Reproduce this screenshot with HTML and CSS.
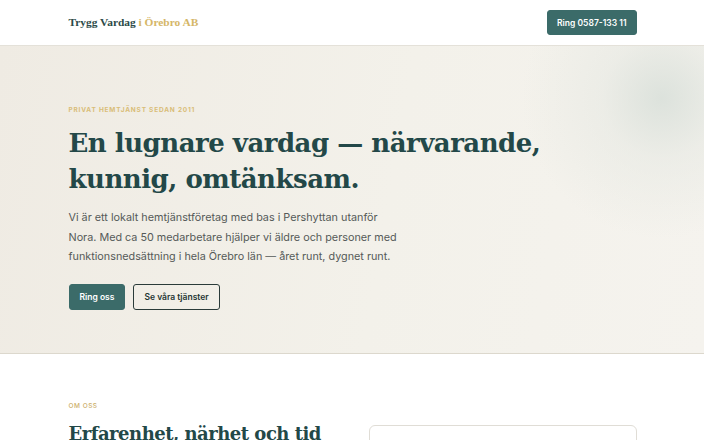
FILE: index.html
```html
<!DOCTYPE html>
<html lang="sv">
<head>
    <meta charset="UTF-8">
    <meta name="viewport" content="width=device-width, initial-scale=1.0">
    <link rel="stylesheet" href="styles.css">
    <title>Trygg Vardag i Örebro AB</title>
</head>
<body>
    <header class="site-header">
        <div class="container header-row">
            <a href="#" class="brand">Trygg Vardag <span>i Örebro AB</span></a>
            <a href="#" class="btn btn-primary btn-small">Ring 0587-133 11</a>
        </div>
    </header>

    <section class="hero">
        <div class="container">
            <p class="eyebrow">Privat hemtjänst sedan 2011</p>
            <h1>En lugnare vardag — närvarande, kunnig, omtänksam.</h1>
            <p class="lead">Vi är ett lokalt hemtjänstföretag med bas i Pershyttan utanför Nora. Med ca 50 medarbetare hjälper vi äldre och personer med funktionsnedsättning i hela Örebro län — året runt, dygnet runt.</p>
            <div class="actions">
                <a href="#" class="btn btn-primary">Ring oss</a>
                <a href="#" class="btn btn-outline">Se våra tjänster</a>
            </div>
        </div>
    </section>

    <section class="about">
        <div class="container">
            <p class="eyebrow">Om oss</p>
            <div class="about-grid">
                <h2>Erfarenhet, närhet och tid</h2>
                <div class="card"></div>
            </div>
        </div>
    </section>
</body>
</html>
```

FILE: styles.css
```css
body {
    margin: 0;
    padding: 0;
    font-family: Inter, "Noto Sans", sans-serif;
    color: #4a4f4e;
    background-color: #fff;
}

.container {
    max-width: 568px;
    margin: 0 auto;
    padding-left: 1px;
}

.site-header {
    background-color: #fff;
    border-bottom: 1px solid #e4e1d9;
}

.header-row {
    height: 45px;
    display: flex;
    align-items: center;
    justify-content: space-between;
}

.brand {
    font-family: "Liberation Serif", serif;
    font-weight: bold;
    font-size: 11.4px;
    color: #2c4a48;
    text-decoration: none;
    margin-top: -1px;
}

.brand span {
    color: #d5b667;
}

.btn {
    display: inline-block;
    font-size: 8.5px;
    font-weight: 600;
    text-decoration: none;
    border-radius: 3px;
    padding: 8px 11px;
    box-sizing: border-box;
}

.btn-primary {
    background-color: #3b6b69;
    color: #fff;
    border: 1px solid #3b6b69;
}

.btn-outline {
    color: #1f3533;
    border: 1px solid #2a3b39;
    background-color: transparent;
}

.btn-small {
    padding: 7px 9px;
    height: 25px;
}

.hero {
    background:
        radial-gradient(circle at 94% 17%, rgba(216, 223, 217, 0.85) 0, rgba(228, 231, 225, 0.5) 60px, rgba(243, 240, 233, 0) 140px),
        linear-gradient(100deg, #efebe3 0%, #f3f1ea 55%, #f5f3ee 100%);
    border-bottom: 1px solid #dcd8cd;
    padding: 60px 0 43px;
}

.eyebrow {
    margin: 0;
    font-size: 6.5px;
    font-weight: 700;
    letter-spacing: 0.8px;
    text-transform: uppercase;
    color: #d9bd78;
}

.hero h1 {
    margin: 11px 0 0;
    font-family: "DejaVu Serif", serif;
    font-weight: bold;
    font-size: 26px;
    line-height: 36px;
    letter-spacing: -0.5px;
    color: #234848;
    max-width: 500px;
}

.lead {
    margin: 11px 0 0;
    font-size: 10.8px;
    line-height: 19.5px;
    color: #555a58;
    max-width: 335px;
}

.actions {
    display: flex;
    gap: 8px;
    margin-top: 17px;
}

.actions .btn {
    height: 26px;
    padding: 7px 10px;
}

.about {
    padding: 48px 0 0;
}

.about .eyebrow {
    font-weight: 500;
    letter-spacing: 0.5px;
    color: #cdb06c;
}

.about-grid {
    display: grid;
    grid-template-columns: 1fr 1fr;
    gap: 32px;
    margin-top: 15px;
}

.about h2 {
    margin: -2px 0 0;
    font-family: "DejaVu Serif", serif;
    font-weight: bold;
    font-size: 18px;
    letter-spacing: -0.5px;
    color: #234848;
}

.card {
    height: 60px;
    border: 1px solid #e0ddd6;
    border-radius: 6px;
}
```
